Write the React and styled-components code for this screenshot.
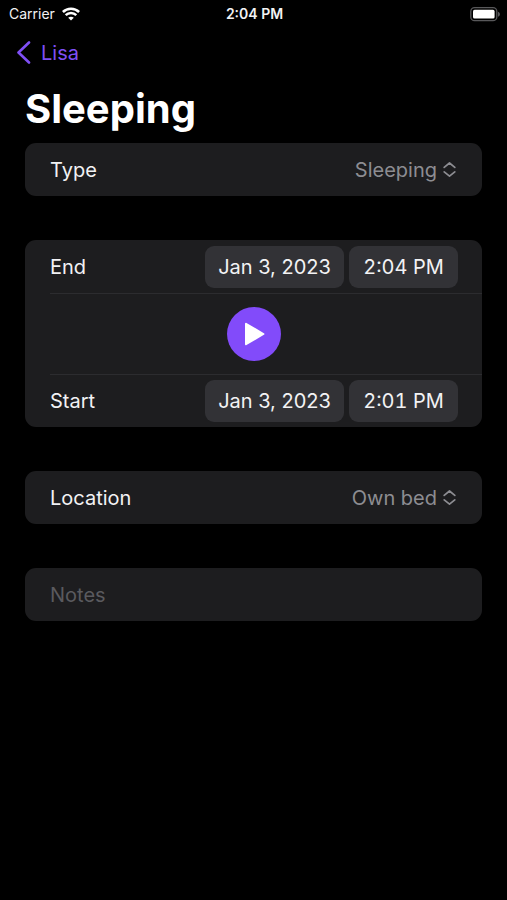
import React, { useState } from 'react'
import styled, { createGlobalStyle } from 'styled-components'

const GlobalStyle = createGlobalStyle`
    * {
        box-sizing: border-box;
    }

    body {
        margin: 0;
        background: #000;
        color: #f2f2f4;
        font-family: Inter, "Liberation Sans", sans-serif;
        font-size: 20px;
        line-height: 28px;
    }

    button, input, select {
        margin: 0;
        padding: 0;
        border: 0;
        outline: none;
        background: none;
        color: inherit;
        font: inherit;
    }
`

const StatusBar = styled.div`
    display: grid;
    grid-template-columns: 1fr auto 1fr;
    align-items: center;
    height: 28px;
    padding: 0 7px 0 9px;
    font-size: 14px;
    line-height: 20px;
`

const Carrier = styled.div`
    display: flex;
    align-items: center;
    gap: 7px;
`

const Clock = styled.div`
    font-weight: 600;
`

const Battery = styled.svg`
    justify-self: end;
`

const NavBar = styled.nav`
    display: flex;
    align-items: center;
    height: 49px;
    padding: 0 16px;
`

const BackLink = styled.a`
    display: flex;
    align-items: center;
    gap: 10px;
    color: #7f4ff5;
    text-decoration: none;
`

const Content = styled.main`
    padding: 8px 25px;
`

const Title = styled.h1`
    margin: 0 0 10px;
    font-size: 40px;
    font-weight: 700;
    line-height: 48px;
    color: #fff;
`

const Form = styled.form`
    display: flex;
    flex-direction: column;
    gap: 44px;
`

const Card = styled.section`
    padding-left: 25px;
    border-radius: 11px;
    background: #1d1d1f;
`

const Row = styled.div`
    display: flex;
    align-items: center;
    gap: 5px;
    min-height: ${props => props.$tall ? '81px' : '53px'};
    padding-right: ${props => props.$tall ? '25px' : '24px'};

    & + & {
        border-top: 1px solid #2c2c2f;
    }
`

const Label = styled.label`
    flex: 1;
`

const Select = styled.select`
    flex: 1;
    appearance: none;
    color: #8d8d92;
    text-align-last: right;
    cursor: pointer;

    option {
        color: #000;
    }
`

const Pill = styled.button`
    width: ${props => props.$wide ? '139px' : '109px'};
    height: 42px;
    border-radius: 9px;
    background: #323236;
    font-variant-numeric: ${props => props.$wide ? 'normal' : 'tabular-nums'};
    white-space: nowrap;
    cursor: pointer;
`

/* the card is only inset on the left, so pull back by the same amount */
const PlayWrap = styled.div`
    flex: 1;
    display: flex;
    justify-content: center;
    margin-left: -25px;
    margin-right: -25px;
`

const PlayButton = styled.button`
    display: flex;
    align-items: center;
    justify-content: center;
    width: 54px;
    height: 54px;
    border-radius: 50%;
    background: #824bfa;
    cursor: pointer;
`

const NotesInput = styled.input`
    flex: 1;
    min-width: 0;

    &::placeholder {
        color: #5a5a5e;
        opacity: 1;
    }
`

const WifiIcon = () => (
    <svg width="18" height="14" viewBox="0 0 18 14" fill="none" stroke="#fff" strokeWidth="2.5" aria-hidden="true">
        <path d="M0.9 5 C5.4 0.5 12.6 0.5 17.1 5" />
        <path d="M3.7 8.2 C6.6 5.3 11.4 5.3 14.3 8.2" />
        <path d="M9 13.6 L6.2 10.8 C7.8 9.3 10.2 9.3 11.8 10.8 Z" fill="#fff" stroke="none" />
    </svg>
)

const BatteryIcon = () => (
    <Battery width="30" height="15" viewBox="0 0 30 15" aria-hidden="true">
        <rect x="0.8" y="0.7" width="26" height="13" rx="3.8" fill="none" stroke="#58585a" strokeWidth="1.3" />
        <rect x="3" y="2.8" width="21.6" height="8.8" rx="1.6" fill="#fff" />
        <path d="M28 4.7 C30.6 5.7 30.6 8.7 28 9.7 Z" fill="#58585a" />
    </Battery>
)

const BackIcon = () => (
    <svg width="15" height="24" viewBox="0 0 15 24" fill="none" stroke="currentColor" strokeWidth="2.6" strokeLinecap="round" strokeLinejoin="round" aria-hidden="true">
        <path d="M13 1.5 L2.5 11.5 L13 21.5" />
    </svg>
)

const UpDownIcon = () => (
    <svg width="16" height="16" viewBox="0 0 16 16" fill="none" stroke="#8d8d92" strokeWidth="1.7" strokeLinecap="round" strokeLinejoin="round" aria-hidden="true">
        <path d="M2.2 5.4 L7.5 1 L12.8 5.4" />
        <path d="M2.2 9.8 L7.5 14.2 L12.8 9.8" />
    </svg>
)

const PlayIcon = () => (
    <svg width="22" height="24" viewBox="0 0 22 24" fill="#fff" stroke="#fff" strokeWidth="2" strokeLinejoin="round" aria-hidden="true">
        <path d="M3 1.8 L20.4 12 L3 22.2 Z" />
    </svg>
)

const SelectRow = ({ id, label, options }) => {
    const [value, setValue] = useState(options[0])

    return (
        <Row>
            <Label htmlFor={id}>{label}</Label>
            <Select id={id} value={value} onChange={event => setValue(event.target.value)}>
                {options.map(option => <option key={option}>{option}</option>)}
            </Select>
            <UpDownIcon />
        </Row>
    )
}

const DateRow = ({ id, label, date, time }) => (
    <Row>
        <Label htmlFor={id}>{label}</Label>
        <Pill type="button" id={id} $wide>{date}</Pill>
        <Pill type="button">{time}</Pill>
    </Row>
)

const App = () => {
    const [notes, setNotes] = useState('')

    return (
        <>
            <GlobalStyle />
            <StatusBar>
                <Carrier>Carrier <WifiIcon /></Carrier>
                <Clock>2:04 PM</Clock>
                <BatteryIcon />
            </StatusBar>
            <NavBar>
                <BackLink href="#lisa"><BackIcon /> Lisa</BackLink>
            </NavBar>
            <Content>
                <Title>Sleeping</Title>
                <Form>
                    <Card>
                        <SelectRow id="type" label="Type" options={['Sleeping']} />
                    </Card>
                    <Card>
                        <DateRow id="end" label="End" date="Jan 3, 2023" time="2:04 PM" />
                        <Row $tall>
                            <PlayWrap>
                                <PlayButton type="button" aria-label="Play"><PlayIcon /></PlayButton>
                            </PlayWrap>
                        </Row>
                        <DateRow id="start" label="Start" date="Jan 3, 2023" time="2:01 PM" />
                    </Card>
                    <Card>
                        <SelectRow id="location" label="Location" options={['Own bed']} />
                    </Card>
                    <Card>
                        <Row>
                            <NotesInput
                                aria-label="Notes"
                                placeholder="Notes"
                                value={notes}
                                onChange={event => setNotes(event.target.value)}
                            />
                        </Row>
                    </Card>
                </Form>
            </Content>
        </>
    )
}

export default App
